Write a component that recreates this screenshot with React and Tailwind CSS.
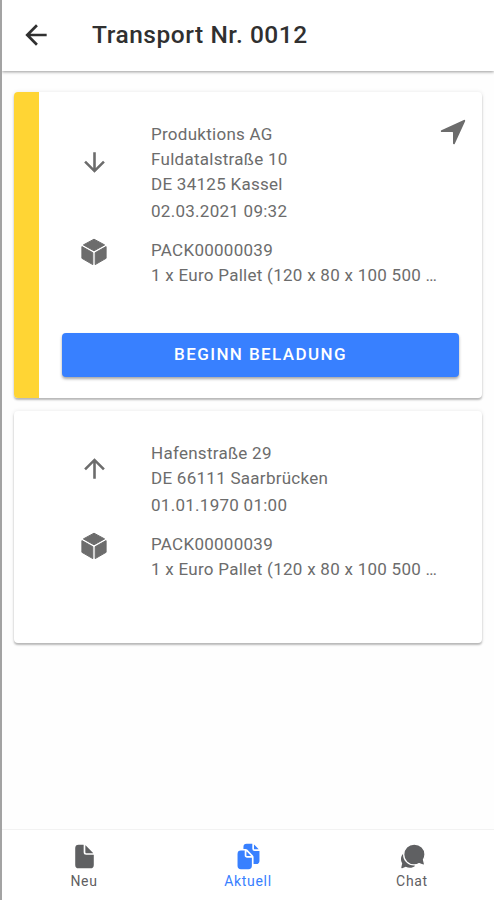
import { IoNavigate, IoDocument, IoDocuments } from "react-icons/io5";
import { MdArrowBack, MdArrowDownward, MdArrowUpward } from "react-icons/md";

const PACKAGE = { id: "PACK00000039", detail: "1 x Euro Pallet (120 x 80 x 100 500 …" };

function Cube({ className }) {
  return (
    <svg
      viewBox="0 0 30 30"
      fill="currentColor"
      stroke="currentColor"
      strokeWidth="1"
      strokeLinejoin="round"
      className={className}
    >
      <path d="M15 2.2 L25.6 7.9 L15 13.8 L4.4 7.9 Z" />
      <path d="M2.9 9.6 L13.8 15.7 V27.6 L2.9 21.3 Z" />
      <path d="M27.1 9.6 L16.2 15.7 V27.6 L27.1 21.3 Z" />
    </svg>
  );
}

function ChatBubbles({ className }) {
  return (
    <svg viewBox="0 0 27 27" fill="currentColor" className={className}>
      <path d="M8.5 9 C4.5 9.5 2 12.4 2 16 C2 17.7 2.4 19 3.2 20.3 L2.3 24.5 C2.2 25.1 2.6 25.5 3.2 25.2 L6.7 23.7 C9.6 25.3 13.6 25.2 16 23 Z" />
      <path
        className="stroke-white"
        strokeWidth="1.3"
        d="M15.2 1 C21.5 1 26 5.6 26 11.3 C26 13.4 25.5 15.1 24.5 16.6 L25.5 20.8 C25.6 21.8 24.9 22.3 24.1 22 L20.2 20.6 C18.8 21.4 17.1 21.9 15.2 21.9 C9.2 21.9 4.7 17.3 4.7 11.5 C4.7 5.6 9.2 1 15.2 1 Z"
      />
    </svg>
  );
}

function Stop({ Arrow, address, date, topClass }) {
  return (
    <div className={`flex flex-col ${topClass}`}>
      <div className="flex items-center">
        <div className="mb-[22px] flex w-[84px] shrink-0 justify-center">
          <Arrow className="size-[31px]" />
        </div>
        <div className="ml-[15px]">
          {address.map((line) => (
            <p key={line} className="h-[25px] leading-[25px]">{line}</p>
          ))}
          <p className="mt-[2px] h-[25px] leading-[25px]">{date}</p>
        </div>
      </div>
      <div className="mt-[14px] flex">
        <div className="mt-[-1px] flex w-[84px] shrink-0 justify-center">
          <Cube className="size-[30px]" />
        </div>
        <div className="ml-[15px] whitespace-nowrap">
          <p className="h-[25px] leading-[25px]">{PACKAGE.id}</p>
          <p className="h-[25px] leading-[25px]">{PACKAGE.detail}</p>
        </div>
      </div>
    </div>
  );
}

function Tab({ Icon, label, active }) {
  return (
    <div
      className={`flex flex-1 flex-col items-center pt-[13px] ${
        active ? "text-[#3880ff]" : "text-[#5f6062]"
      }`}
    >
      <Icon className="size-[27px]" />
      <span className="mt-[2px] text-[14px] leading-[18px] tracking-[0.7px]">{label}</span>
    </div>
  );
}

export default function App() {
  return (
    <div className="flex h-[900px] w-[494px] flex-col overflow-hidden border-l-2 border-[#a3a3a3] bg-[#fefefe] font-[Roboto,sans-serif] text-[#6c6c6c]">
      <header className="flex h-[71px] shrink-0 items-center bg-white text-[#303030] shadow-[0_1px_3px_rgba(0,0,0,0.4)]">
        <MdArrowBack className="ml-[18px] mt-[-1px] size-[32px]" />
        <h1 className="ml-[40px] mt-[-2px] text-[24.5px] font-medium leading-[30px] tracking-[0.55px]">
          Transport Nr. 0012
        </h1>
      </header>

      <main className="flex flex-1 flex-col gap-[13px] px-[12px] pt-[21px] text-[17px] tracking-[0.27px]">
        <section className="flex h-[306px] overflow-hidden rounded-[4px] bg-white shadow-[0_2px_2px_rgba(0,0,0,0.25),0_0_4px_rgba(0,0,0,0.09)]">
          <div className="w-[25px] shrink-0 bg-[#ffd534]" />
          <div className="relative flex flex-1 flex-col">
            <IoNavigate className="absolute right-[14px] top-[25px] size-[30px]" />
            <Stop
              topClass="ml-[13px] mt-[30px]"
              Arrow={MdArrowDownward}
              address={["Produktions AG", "Fuldatalstraße 10", "DE 34125 Kassel"]}
              date="02.03.2021 09:32"
            />
            <button className="mx-[23px] mt-[45px] h-[44px] rounded-[4px] bg-[#3880ff] text-[17px] font-medium tracking-[1.4px] text-white shadow-[0_2px_3px_rgba(0,0,0,0.35)]">
              BEGINN BELADUNG
            </button>
          </div>
        </section>

        <section className="h-[232px] rounded-[4px] bg-white shadow-[0_2px_2px_rgba(0,0,0,0.25),0_0_4px_rgba(0,0,0,0.09)]">
          <Stop
            topClass="ml-[38px] pt-[30px]"
            Arrow={MdArrowUpward}
            address={["Hafenstraße 29", "DE 66111 Saarbrücken"]}
            date="01.01.1970 01:00"
          />
        </section>
      </main>

      <nav className="flex h-[71px] shrink-0 border-t border-[#f2f2f2] bg-white">
        <Tab Icon={IoDocument} label="Neu" />
        <Tab Icon={IoDocuments} label="Aktuell" active />
        <Tab Icon={ChatBubbles} label="Chat" />
      </nav>
    </div>
  );
}
